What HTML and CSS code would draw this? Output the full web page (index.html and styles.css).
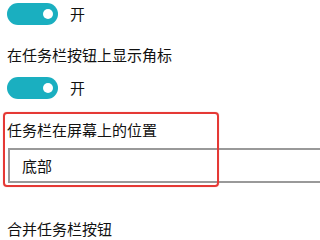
FILE: index.html
```html
<!DOCTYPE html>
<html lang="zh-CN">
<head>
<meta charset="utf-8">
<link rel="stylesheet" href="styles.css">
</head>
<body>
<div class="page">
  <div class="toggle-row">
    <span class="toggle"><span class="knob"></span></span>
    <span class="state">开</span>
  </div>
  <div class="label first">在任务栏按钮上显示角标</div>
  <div class="toggle-row second">
    <span class="toggle"><span class="knob"></span></span>
    <span class="state">开</span>
  </div>
  <div class="section">
    <div class="label">任务栏在屏幕上的位置</div>
    <div class="dropdown">底部</div>
    <div class="highlight"></div>
  </div>
  <div class="label last">合并任务栏按钮</div>
</div>
</body>
</html>
```
FILE: styles.css
```css
html, body {
  margin: 0;
  padding: 0;
  background: #fff;
  overflow: hidden;
}
body {
  width: 320px;
  height: 240px;
  font-family: "Noto Sans CJK SC", "Noto Sans", sans-serif;
  font-size: 15px;
  color: #111;
}
.page {
  padding: 3px 0 0 7px;
}
.toggle-row {
  display: flex;
  align-items: center;
  gap: 12px;
  height: 22px;
}
.toggle-row.second {
  margin-top: 12px;
}
.toggle {
  width: 51px;
  height: 22px;
  border-radius: 11px;
  background: #1aafc0;
  display: flex;
  align-items: center;
  justify-content: flex-end;
  padding-right: 5px;
  box-sizing: border-box;
}
.knob {
  width: 10px;
  height: 10px;
  border-radius: 50%;
  background: #fff;
}
.state {
  line-height: 20px;
}
.label {
  line-height: 20px;
}
.label.first {
  margin-top: 20px;
}
.section {
  position: relative;
  margin-top: 13px;
  padding-top: 8px;
}
.dropdown {
  margin: 8px 0 0 1px;
  height: 35px;
  box-sizing: border-box;
  border: 2px solid #999;
  border-right: none;
  padding-left: 12px;
  display: flex;
  align-items: center;
}
.highlight {
  position: absolute;
  top: 0;
  left: -4px;
  width: 216px;
  height: 75px;
  box-sizing: border-box;
  border: 2px solid #e53935;
  border-radius: 4px;
  box-shadow: 0 0 1px rgba(229, 57, 53, 0.5);
}
.label.last {
  margin-top: 36px;
}
```
